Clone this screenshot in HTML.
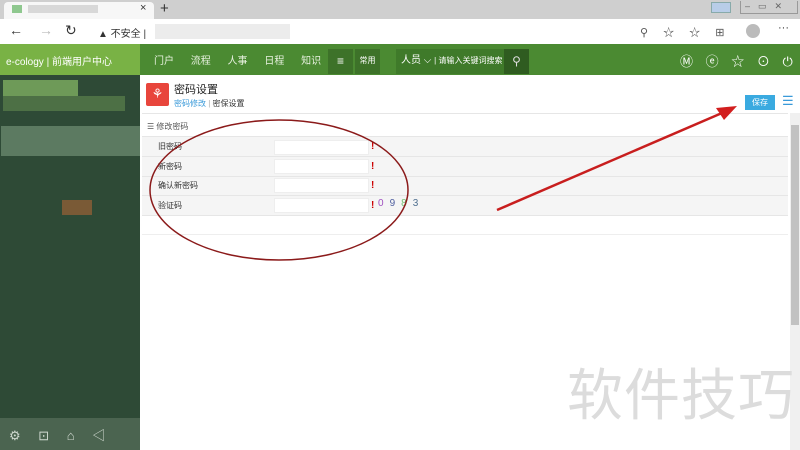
<!DOCTYPE html>
<html><head><meta charset="utf-8">
<style>
*{margin:0;padding:0;box-sizing:border-box}
body{width:800px;height:450px;overflow:hidden;position:relative;background:#fff;font-family:"Liberation Sans","Noto Sans CJK SC",sans-serif;font-size:9px;color:#333}
.abs{position:absolute}
</style></head><body>
<div class="abs" style="left:0;top:0;width:800px;height:19px;background:#cfcfcf"></div>
<div class="abs" style="left:4px;top:2px;width:150px;height:17px;background:#f7f7f7;border-radius:4px 4px 0 0"></div>
<div class="abs" style="left:12px;top:5px;width:10px;height:8px;background:#8fc88f"></div>
<div class="abs" style="left:28px;top:5px;width:70px;height:8px;background:#d8d8d8"></div>
<div class="abs" style="left:140px;top:2px;font-size:11px;color:#333">×</div>
<div class="abs" style="left:160px;top:0px;font-size:15px;color:#333">+</div>
<div class="abs" style="left:711px;top:2px;width:20px;height:11px;background:#b8cde8;border:1px solid #8aa"></div>
<div class="abs" style="left:740px;top:1px;width:58px;height:13px;border:1px solid #999;border-top:none;font-size:9px;color:#666;letter-spacing:8px;padding-left:4px">–▭✕</div>
<div class="abs" style="left:0;top:19px;width:800px;height:25px;background:#fff"></div>
<div class="abs" style="left:9px;top:22px;font-size:14px;color:#333">←</div>
<div class="abs" style="left:39px;top:22px;font-size:14px;color:#bbb">→</div>
<div class="abs" style="left:65px;top:22px;font-size:14px;color:#333">↻</div>
<div class="abs" style="left:98px;top:25px;font-size:10px;color:#333">▲ 不安全 |</div>
<div class="abs" style="left:155px;top:24px;width:135px;height:15px;background:#ececec"></div>
<div class="abs" style="left:640px;top:24px;font-size:11px;color:#555;word-spacing:12px">⚲ ☆ ☆ ⊞</div>
<div class="abs" style="left:746px;top:24px;width:14px;height:14px;border-radius:50%;background:#bbb"></div>
<div class="abs" style="left:778px;top:22px;font-size:11px;color:#333">···</div>
<div class="abs" style="left:0;top:44px;width:800px;height:31px;background:#4b8a32"></div>
<div class="abs" style="left:0;top:44px;width:140px;height:31px;background:#79b245"></div>
<div class="abs" style="left:6px;top:53px;font-size:10px;color:#fff">e-cology | 前端用户中心</div>
<div class="abs" style="left:154px;top:52px;font-size:10px;color:#e8f2e0;word-spacing:14px">门户 流程 人事 日程 知识</div>
<div class="abs" style="left:328px;top:49px;width:25px;height:25px;background:#3d7229;color:#fff;font-size:12px;text-align:center;line-height:24px">≡</div>
<div class="abs" style="left:355px;top:49px;width:25px;height:25px;background:#3d7229;color:#fff;font-size:8px;text-align:center;line-height:24px">常用</div>
<div class="abs" style="left:396px;top:49px;width:108px;height:25px;background:#3f7a2a;color:#fff;font-size:10px;line-height:24px;padding-left:5px">人员 ⌵ <span style="font-size:8px">| 请输入关键词搜索</span></div>
<div class="abs" style="left:504px;top:49px;width:25px;height:25px;background:#2f5c20;color:#ddd;font-size:12px;text-align:center;line-height:24px">⚲</div>
<div class="abs" style="left:680px;top:51px;font-size:13px;color:#fff;word-spacing:9px">Ⓜ ⓔ ☆ ⊙ ⏻</div>
<div class="abs" style="left:0;top:75px;width:140px;height:343px;background:#2e4a36"></div>
<div class="abs" style="left:3px;top:80px;width:75px;height:16px;background:#6e9a58"></div>
<div class="abs" style="left:3px;top:96px;width:122px;height:15px;background:#4d7045"></div>
<div class="abs" style="left:1px;top:126px;width:139px;height:30px;background:#5c7a61"></div>
<div class="abs" style="left:62px;top:200px;width:30px;height:15px;background:#7a5a36"></div>
<div class="abs" style="left:0;top:418px;width:140px;height:32px;background:#4b6450"></div>
<div class="abs" style="left:9px;top:425px;font-size:13px;color:#cfd8cf;word-spacing:14px">⚙ ⊡ ⌂ ◁</div>
<div class="abs" style="left:146px;top:83px;width:23px;height:23px;background:#e8453c;border-radius:2px;color:#fff;font-size:13px;text-align:center;line-height:22px">⚘</div>
<div class="abs" style="left:174px;top:81px;font-size:11px;color:#222">密码设置</div>
<div class="abs" style="left:174px;top:98px;font-size:8px;color:#3a9ad9">密码修改 <span style="color:#aaa">|</span> <span style="color:#333">密保设置</span></div>
<div class="abs" style="left:745px;top:95px;width:30px;height:15px;background:#3aaae0;color:#fff;font-size:8px;text-align:center;line-height:15px">保存</div>
<div class="abs" style="left:782px;top:93px;font-size:13px;color:#3a9ad9">☰</div>
<div class="abs" style="left:142px;top:113px;width:646px;height:1px;background:#e6e6e6"></div>
<div class="abs" style="left:790px;top:113px;width:10px;height:337px;background:#f0f0f0"></div>
<div class="abs" style="left:791px;top:125px;width:8px;height:200px;background:#c2c2c2"></div>
<div class="abs" style="left:147px;top:121px;font-size:8px;color:#555">☰ 修改密码</div>
<div class="abs" style="left:142px;top:136px;width:646px;height:1px;background:#e6e6e6"></div>
<div class="abs" style="left:142px;top:137px;width:646px;height:78px;background:#f5f5f5"></div>
<div class="abs" style="left:142px;top:156px;width:646px;height:1px;background:#e6e6e6"></div>
<div class="abs" style="left:142px;top:176px;width:646px;height:1px;background:#e6e6e6"></div>
<div class="abs" style="left:142px;top:195px;width:646px;height:1px;background:#e6e6e6"></div>
<div class="abs" style="left:142px;top:215px;width:646px;height:1px;background:#e6e6e6"></div>
<div class="abs" style="left:142px;top:234px;width:646px;height:1px;background:#eee"></div>
<div class="abs" style="left:158px;top:137px;font-size:8px;color:#333;line-height:19.5px">旧密码<br>新密码<br>确认新密码<br>验证码</div>
<div class="abs" style="left:274px;top:140px;width:95px;height:15px;background:#fff;border:1px solid #eee"></div>
<div class="abs" style="left:274px;top:159px;width:95px;height:15px;background:#fff;border:1px solid #eee"></div>
<div class="abs" style="left:274px;top:178px;width:95px;height:15px;background:#fff;border:1px solid #eee"></div>
<div class="abs" style="left:274px;top:198px;width:95px;height:15px;background:#fff;border:1px solid #eee"></div>
<div class="abs" style="left:371px;top:137px;font-size:10px;font-weight:bold;color:#c00;line-height:19.5px">!<br>!<br>!<br>!</div>
<div class="abs" style="left:378px;top:198px;font-size:10px;letter-spacing:6px"><span style="color:#a050c0">0</span><span style="color:#5060a0">9</span><span style="color:#70c070">8</span><span style="color:#507090">3</span></div>
<div class="abs" style="left:567px;top:351px;font-size:56px;color:#dcdcdc;letter-spacing:1px;font-family:'Noto Sans CJK SC',sans-serif">软件技巧</div>
<svg class="abs" style="left:0;top:0" width="800" height="450">
<ellipse cx="279" cy="190" rx="129" ry="70" fill="none" stroke="#8b1a1a" stroke-width="1.5"/>
<line x1="497" y1="210" x2="722" y2="113" stroke="#c81e1e" stroke-width="2.5"/>
<polygon points="737,106 716,108 724,120" fill="#d21e1e"/>
</svg>
</body></html>
